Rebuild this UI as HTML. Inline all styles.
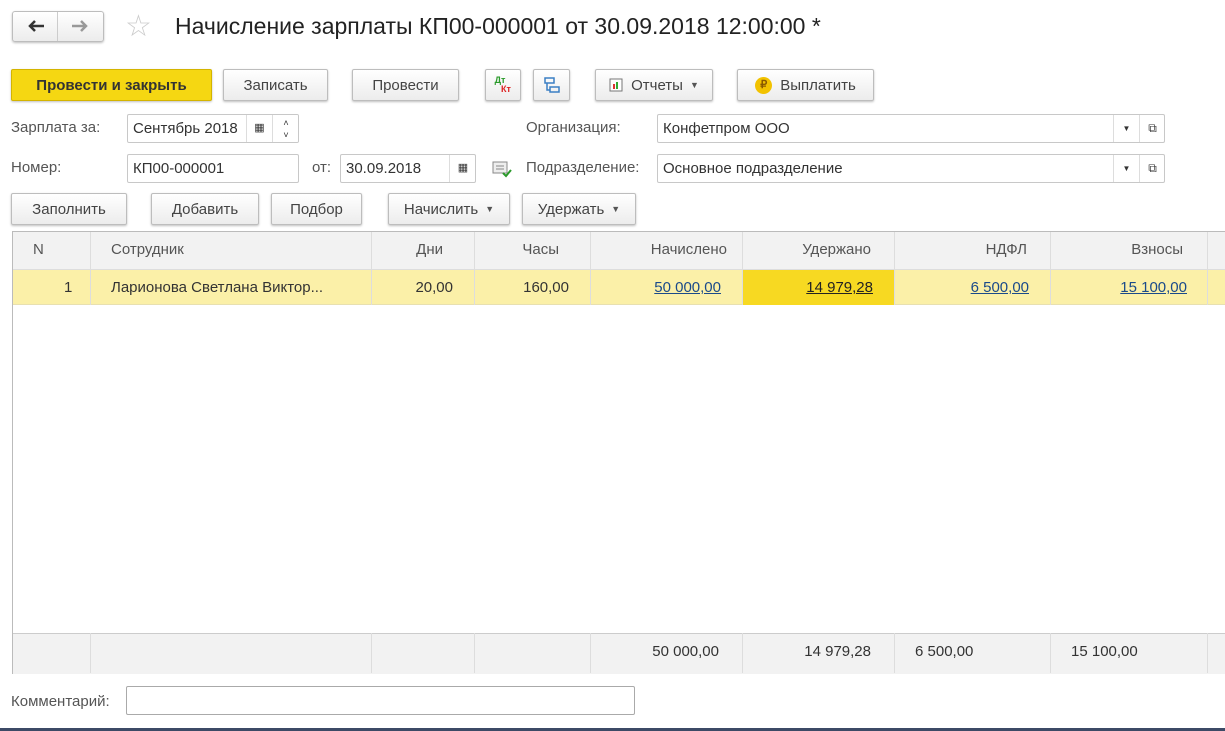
<!DOCTYPE html>
<html><head><meta charset="utf-8"><style>
*{box-sizing:border-box}
body{margin:0;width:1225px;height:731px;background:#fff;font-family:"Liberation Sans",Arial,sans-serif;font-size:15px;color:#333;position:relative;overflow:hidden}
.a{position:absolute}
.btn{position:absolute;height:32px;border:1px solid #bdbdbd;border-radius:2px;background:linear-gradient(#fff,#ececec);box-shadow:0 1px 2px rgba(0,0,0,.25);display:flex;align-items:center;justify-content:center;color:#444;font-size:15px;white-space:nowrap}
.inp{position:absolute;height:29px;border:1px solid #c8c8c8;border-radius:2px;background:#fff;display:flex;align-items:center;padding-left:5px;white-space:nowrap;overflow:hidden}
.lbl{position:absolute;color:#555;font-size:15px}
.dd{font-size:9px;margin-left:7px;color:#555}
.col{position:absolute;top:0;bottom:0;border-left:1px solid #ddd}
.c{position:absolute;display:flex;align-items:center;white-space:nowrap}
.lnk{color:#1a4a8a;text-decoration:underline}
</style></head><body>
<!-- nav -->
<div class="btn" style="left:12px;top:11px;width:92px;height:31px;border-radius:3px"></div>
<div class="a" style="left:57px;top:12px;height:29px;border-left:1px solid #ccc"></div>
<svg class="a" style="left:26px;top:18px" width="20" height="16"><path d="M18 8H4M9 3L4 8l5 5" fill="none" stroke="#333" stroke-width="2.5"/></svg>
<svg class="a" style="left:70px;top:18px" width="20" height="16"><path d="M2 8h14M11 3l5 5-5 5" fill="none" stroke="#999" stroke-width="2.5"/></svg>
<div class="a" style="left:125px;top:9px;font-size:30px;color:#ccc">☆</div>
<div class="a" style="left:175px;top:13px;font-size:23px;color:#222">Начисление зарплаты КП00-000001 от 30.09.2018 12:00:00 *</div>
<!-- toolbar -->
<div class="btn" style="left:11px;top:69px;width:201px;background:#f5d712;border-color:#d4b400;color:#333;font-weight:bold">Провести и закрыть</div>
<div class="btn" style="left:223px;top:69px;width:105px">Записать</div>
<div class="btn" style="left:352px;top:69px;width:107px">Провести</div>
<div class="btn" style="left:485px;top:69px;width:36px;flex-direction:column;line-height:9px;font-size:9px;font-weight:bold"><span style="color:#2a9a2a;margin-right:6px">Дт</span><span style="color:#d22;margin-left:6px">Кт</span></div>
<div class="btn" style="left:533px;top:69px;width:37px"><svg width="18" height="18"><rect x="2" y="2" width="9" height="5" fill="none" stroke="#3b7fc4" stroke-width="1.5"/><rect x="7" y="11" width="9" height="5" fill="none" stroke="#3b7fc4" stroke-width="1.5"/><path d="M4 7v7h3" fill="none" stroke="#3b7fc4" stroke-width="1.5"/></svg></div>
<div class="btn" style="left:595px;top:69px;width:118px"><svg width="14" height="14" style="margin-right:8px"><rect x="1" y="1" width="12" height="12" fill="#fff" stroke="#777"/><rect x="4" y="6" width="2" height="5" fill="#d33"/><rect x="7" y="4" width="2" height="7" fill="#3a3"/></svg>Отчеты<span class="dd">▼</span></div>
<div class="btn" style="left:737px;top:69px;width:137px"><span style="display:inline-block;width:17px;height:17px;border-radius:50%;background:#f2c200;color:#8a5a00;font-size:11px;text-align:center;line-height:17px;margin-right:8px;font-weight:bold">₽</span>Выплатить</div>
<!-- fields -->
<div class="lbl" style="left:11px;top:119px">Зарплата за:</div>
<div class="inp" style="left:127px;top:114px;width:172px">Сентябрь 2018<span style="position:absolute;left:118px;top:0;bottom:0;width:26px;border-left:1px solid #ddd;background:#fff;font-size:11px;text-align:center;line-height:27px">▦</span><span style="position:absolute;left:144px;top:0;bottom:0;width:27px;border-left:1px solid #ddd;background:#fff;font-size:9px;text-align:center;line-height:12px;padding-top:2px">˄<br>˅</span></div>
<div class="lbl" style="left:526px;top:119px">Организация:</div>
<div class="inp" style="left:657px;top:114px;width:508px">Конфетпром ООО<span style="position:absolute;left:455px;top:0;bottom:0;width:26px;border-left:1px solid #ddd;font-size:8px;text-align:center;line-height:27px">▼</span><span style="position:absolute;left:481px;top:0;bottom:0;width:26px;border-left:1px solid #ddd;font-size:12px;text-align:center;line-height:27px">⧉</span></div>
<div class="lbl" style="left:11px;top:159px">Номер:</div>
<div class="inp" style="left:127px;top:154px;width:172px">КП00-000001</div>
<div class="lbl" style="left:312px;top:159px">от:</div>
<div class="inp" style="left:340px;top:154px;width:136px">30.09.2018<span style="position:absolute;left:108px;top:0;bottom:0;width:27px;border-left:1px solid #ddd;font-size:11px;text-align:center;line-height:27px">▦</span></div>
<svg class="a" style="left:492px;top:160px" width="20" height="18"><rect x="1" y="2" width="14" height="11" fill="#eee" stroke="#888"/><path d="M4 6h8M4 9h8" stroke="#888"/><path d="M11 13l3 3 5-6" fill="none" stroke="#2a9a2a" stroke-width="2"/></svg>
<div class="lbl" style="left:526px;top:159px">Подразделение:</div>
<div class="inp" style="left:657px;top:154px;width:508px">Основное подразделение<span style="position:absolute;left:455px;top:0;bottom:0;width:26px;border-left:1px solid #ddd;font-size:8px;text-align:center;line-height:27px">▼</span><span style="position:absolute;left:481px;top:0;bottom:0;width:26px;border-left:1px solid #ddd;font-size:12px;text-align:center;line-height:27px">⧉</span></div>
<!-- table buttons -->
<div class="btn" style="left:11px;top:193px;width:116px">Заполнить</div>
<div class="btn" style="left:151px;top:193px;width:108px">Добавить</div>
<div class="btn" style="left:271px;top:193px;width:91px">Подбор</div>
<div class="btn" style="left:388px;top:193px;width:122px">Начислить<span class="dd">▼</span></div>
<div class="btn" style="left:522px;top:193px;width:114px">Удержать<span class="dd">▼</span></div>
<!-- table -->
<div class="a" style="left:12px;top:231px;width:1220px;height:443px;border:1px solid #bbb;background:#fff">
 <div class="a" style="left:0;top:0;right:0;height:38px;background:#f2f2f2;border-bottom:1px solid #ddd"></div>
 <div class="a" style="left:0;top:38px;right:0;height:35px;background:#fbf0a8;border-bottom:1px solid #e8e0b0"></div>
 <div class="a" style="left:729px;top:38px;width:152px;height:35px;background:#f7d922"></div>
 <div class="a" style="left:0;top:401px;right:0;height:41px;background:#f2f2f2;border-top:1px solid #ccc"></div>
 <div class="col" style="left:77px;height:73px"></div><div class="col" style="left:358px;height:73px"></div><div class="col" style="left:461px;height:73px"></div><div class="col" style="left:577px;height:73px"></div><div class="col" style="left:729px;height:73px"></div><div class="col" style="left:881px;height:73px"></div><div class="col" style="left:1037px;height:73px"></div><div class="col" style="left:1194px;height:73px"></div>
 <div class="col" style="left:77px;top:401px"></div><div class="col" style="left:358px;top:401px"></div><div class="col" style="left:461px;top:401px"></div><div class="col" style="left:577px;top:401px"></div><div class="col" style="left:729px;top:401px"></div><div class="col" style="left:881px;top:401px"></div><div class="col" style="left:1037px;top:401px"></div><div class="col" style="left:1194px;top:401px"></div>
 <div class="c" style="left:20px;top:9px;color:#555">N</div>
 <div class="c" style="left:98px;top:9px;color:#555">Сотрудник</div>
 <div class="c" style="right:788px;top:9px;color:#555">Дни</div>
 <div class="c" style="right:672px;top:9px;color:#555">Часы</div>
 <div class="c" style="right:504px;top:9px;color:#555">Начислено</div>
 <div class="c" style="right:360px;top:9px;color:#555">Удержано</div>
 <div class="c" style="right:204px;top:9px;color:#555">НДФЛ</div>
 <div class="c" style="right:48px;top:9px;color:#555">Взносы</div>
 <div class="c" style="left:51px;top:47px">1</div>
 <div class="c" style="left:98px;top:47px">Ларионова Светлана Виктор...</div>
 <div class="c" style="right:778px;top:47px">20,00</div>
 <div class="c" style="right:662px;top:47px">160,00</div>
 <div class="c lnk" style="right:510px;top:47px">50 000,00</div>
 <div class="c" style="right:358px;top:47px;color:#222;text-decoration:underline">14 979,28</div>
 <div class="c lnk" style="right:202px;top:47px">6 500,00</div>
 <div class="c lnk" style="right:44px;top:47px">15 100,00</div>
 <div class="c" style="right:512px;top:411px">50 000,00</div>
 <div class="c" style="right:360px;top:411px">14 979,28</div>
 <div class="c" style="left:902px;top:411px">6 500,00</div>
 <div class="c" style="left:1058px;top:411px">15 100,00</div>
</div>
<div class="lbl" style="left:11px;top:693px">Комментарий:</div>
<div class="inp" style="left:126px;top:686px;width:509px;height:29px;border-color:#aaa"></div>
<div class="a" style="left:0;top:728px;width:1225px;height:3px;background:#3c4a66"></div>
</body></html>
